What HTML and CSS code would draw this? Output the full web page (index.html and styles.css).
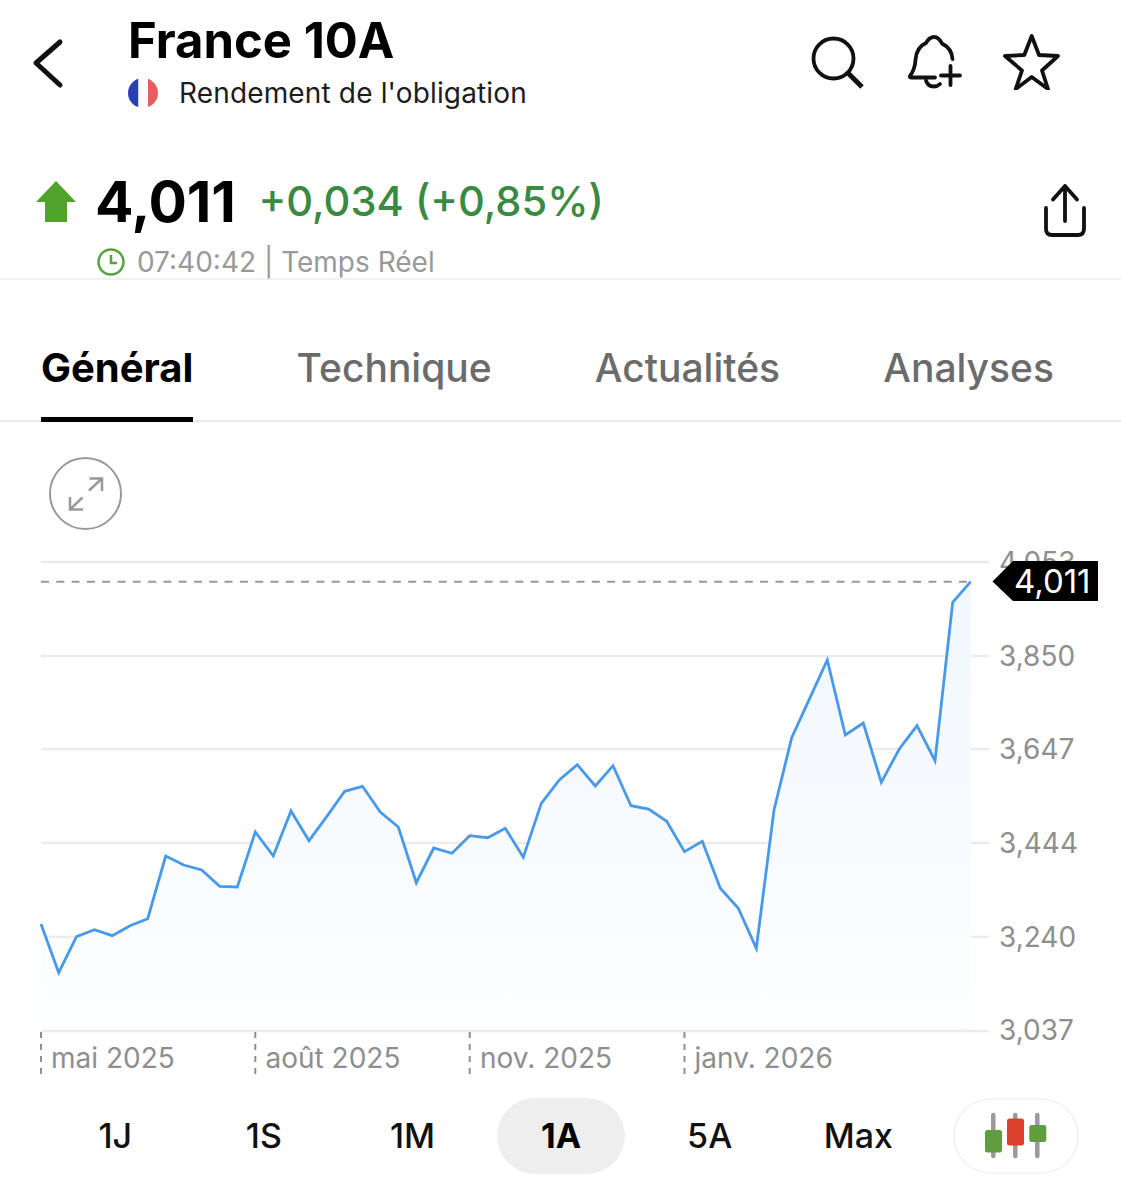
FILE: index.html
```html
<!DOCTYPE html>
<html lang="fr">
<head>
  <meta charset="UTF-8" />
  <title>France 10A</title>
  <link rel="stylesheet" href="styles.css">
</head>
<body>
  <header class="header">
    <button class="back" type="button" aria-label="Retour">
      <svg width="44" height="60" viewBox="26 34 44 60"><path class="icon-line" d="M60 42 L36 63 L60 85" /></svg>
    </button>
    <div class="title-block">
      <h1>France 10A</h1>
      <div class="subtitle">
        <svg class="flag" width="32" height="32" viewBox="0 0 32 32">
          <defs><clipPath id="flag-clip"><circle cx="16" cy="16" r="15" /></clipPath></defs>
          <g clip-path="url(#flag-clip)">
            <rect x="0" y="0" width="11.5" height="32" fill="#2a3fb3" />
            <rect x="11.5" y="0" width="9.5" height="32" fill="#fbfbfb" />
            <rect x="21" y="0" width="11" height="32" fill="#e95c60" />
          </g>
        </svg>
        <span>Rendement de l'obligation</span>
      </div>
    </div>
    <div class="actions">
      <svg width="60" height="60" viewBox="808 30 60 60">
        <circle class="icon-thin" cx="833.5" cy="58.5" r="20" />
        <path class="icon-butt" d="M848 73 L862 87" />
      </svg>
      <svg width="60" height="60" viewBox="905 30 60 60">
        <path class="icon-thin" d="M952.5 59 C952 50 947 46 942 43.5 C940 39.5 937 37 934 37 C931 37 928 39.5 926 43 C919 46 916 52 915.5 60 C915 68 913 72 910 76 C909.5 77 910 77.5 911 77.5 H935" />
        <path class="icon-thin" d="M926 80.5 C927 84 930 86.5 934 86.5 C936.5 86.5 938.5 85.5 940 84" />
        <path class="icon-thin" d="M941 75.5 H960 M950.5 66 V85" />
      </svg>
      <svg width="60" height="60" viewBox="1002 30 60 60">
        <path class="icon-thin" d="M1031.7 36 L1039 55 L1058 56 L1042 70.5 L1048 89 L1031.7 77 L1015.7 89 L1022 70.5 L1005 56 L1024.3 55 Z" />
      </svg>
    </div>
  </header>

  <section class="quote">
    <div class="price-row">
      <svg class="up" width="40" height="42" viewBox="36 182 40 42"><path d="M56 183 L76 204 H67 V224 H45 V204 H36 Z" /></svg>
      <span class="price">4,011</span>
      <span class="change">+0,034 (+0,85%)</span>
      <svg class="share" width="50" height="60" viewBox="1040 180 50 60">
        <path class="icon-thin" d="M1065 185 V220 M1053 198.5 L1065 185 L1077 198.5" />
        <path class="icon-thin" d="M1046 207 V228 C1046 232 1048 234 1052 234 H1078 C1082 234 1084 232 1084 228 V207" />
      </svg>
    </div>
    <div class="time-row">
      <svg width="28" height="28" viewBox="0 0 28 28">
        <circle cx="14" cy="14" r="12.5" class="clock" />
        <path d="M14 7 V15 H20" class="clock" />
      </svg>
      <span>07:40:42 | Temps Réel</span>
    </div>
  </section>

  <nav class="tabs">
    <a class="tab active">Général</a>
    <a class="tab">Technique</a>
    <a class="tab">Actualités</a>
    <a class="tab">Analyses</a>
  </nav>

  <section class="chart">
    <button class="expand" type="button" aria-label="Agrandir">
      <svg width="72" height="72" viewBox="49.5 457.5 72 72">
        <path class="expand-line" d="M88.5 490 L101.5 478 M89 478 H101.5 V490.5" />
        <path class="expand-line" d="M82 497 L69.5 509 M69.5 496.5 V509 H82.5" />
      </svg>
    </button>

    <svg class="plot" width="1121" height="548" viewBox="0 537 1121 548">
      <defs>
        <linearGradient id="area" x1="0" y1="0" x2="0" y2="1">
          <stop offset="0" stop-color="#f1f7fd" />
          <stop offset="1" stop-color="#fdfeff" />
        </linearGradient>
      </defs>

      <line class="grid" x1="41" y1="562" x2="989" y2="562" />
      <line class="grid" x1="41" y1="656" x2="989" y2="656" />
      <line class="grid" x1="41" y1="749" x2="989" y2="749" />
      <line class="grid" x1="41" y1="843" x2="989" y2="843" />
      <line class="grid" x1="41" y1="937" x2="989" y2="937" />

      <polygon class="area" points="41,1031 41,924 58.7,972.7 76.5,936.7 94.4,929.7 112.3,935.7 130,925.7 147.7,918.7 165.7,856 183.7,865 201.7,870 219.7,886.3 237.3,887 255.3,832 273.3,856 291,811 309,840.7 326.7,816.7 344.7,791.3 362.5,786.3 380.3,812 398.3,827 416.3,882.7 433.7,848 452,853.3 469.7,835.7 487.7,837.7 505.3,828.3 523.3,857.3 541.3,803.3 559.3,780 577.3,764.7 595.3,786 613,765.7 631,805.7 648.7,809 666.7,821.3 684.5,851.7 702.3,841.3 720.3,888.3 738.3,908.3 756.3,948.3 774,810 791.7,737.7 809.7,698.3 827.3,660 845.3,735 863.3,723 881.3,782.3 899.3,749 917,725.7 935,760.7 952.7,602.3 970.7,581.7 970.7,1031" />

      <line class="axis" x1="41" y1="1031" x2="989" y2="1031" />
      <line class="last-line" x1="41" y1="581.7" x2="974" y2="581.7" />

      <polyline class="line" points="41,924 58.7,972.7 76.5,936.7 94.4,929.7 112.3,935.7 130,925.7 147.7,918.7 165.7,856 183.7,865 201.7,870 219.7,886.3 237.3,887 255.3,832 273.3,856 291,811 309,840.7 326.7,816.7 344.7,791.3 362.5,786.3 380.3,812 398.3,827 416.3,882.7 433.7,848 452,853.3 469.7,835.7 487.7,837.7 505.3,828.3 523.3,857.3 541.3,803.3 559.3,780 577.3,764.7 595.3,786 613,765.7 631,805.7 648.7,809 666.7,821.3 684.5,851.7 702.3,841.3 720.3,888.3 738.3,908.3 756.3,948.3 774,810 791.7,737.7 809.7,698.3 827.3,660 845.3,735 863.3,723 881.3,782.3 899.3,749 917,725.7 935,760.7 952.7,602.3 970.7,581.7" />

      <text class="label" x="999" y="572">4,053</text>
      <text class="label" x="999" y="666">3,850</text>
      <text class="label" x="999" y="759">3,647</text>
      <text class="label" x="999" y="853">3,444</text>
      <text class="label" x="999" y="947">3,240</text>
      <text class="label" x="999" y="1040">3,037</text>

      <path class="tag" d="M992.5 581.5 L1013 561 H1098 V601 H1013 Z" />
      <text class="tag-text" x="1014" y="593">4,011</text>

      <line class="tick" x1="41" y1="1032" x2="41" y2="1075" />
      <line class="tick" x1="255.3" y1="1032" x2="255.3" y2="1075" />
      <line class="tick" x1="469.7" y1="1032" x2="469.7" y2="1075" />
      <line class="tick" x1="684.5" y1="1032" x2="684.5" y2="1075" />
      <text class="label" x="51" y="1068">mai 2025</text>
      <text class="label" x="265.5" y="1068">août 2025</text>
      <text class="label" x="480" y="1068">nov. 2025</text>
      <text class="label" x="694.5" y="1068">janv. 2026</text>
    </svg>
  </section>

  <div class="ranges">
    <button class="range" type="button">1J</button>
    <button class="range" type="button">1S</button>
    <button class="range" type="button">1M</button>
    <button class="range selected" type="button">1A</button>
    <button class="range" type="button">5A</button>
    <button class="range" type="button">Max</button>
    <button class="candles" type="button" aria-label="Chandeliers">
      <svg width="64" height="48" viewBox="985 1112 64 48">
        <path class="wick" d="M994.3 1115 V1156 M1016.3 1115 V1156 M1038.3 1115 V1156" />
        <rect x="986" y="1130" width="17" height="22.5" rx="2.5" fill="#5f9d3f" />
        <rect x="1008" y="1118.5" width="17" height="27" rx="2.5" fill="#dc402c" />
        <rect x="1030.3" y="1125" width="17" height="17" rx="2.5" fill="#5f9d3f" />
      </svg>
    </button>
  </div>
</body>
</html>
```

FILE: styles.css
```css
* {
  box-sizing: border-box;
}
body {
  margin: 0;
  background: #fff;
  color: #000;
  font-family: 'Inter', 'Liberation Sans', sans-serif;
}
button {
  background: none;
  border: none;
  padding: 0;
  font-family: inherit;
  color: inherit;
}
.icon-line {
  fill: none;
  stroke: #111;
  stroke-width: 5;
  stroke-linecap: round;
  stroke-linejoin: round;
}
.icon-thin {
  fill: none;
  stroke: #111;
  stroke-width: 3.8;
  stroke-linecap: round;
  stroke-linejoin: round;
}
.icon-butt {
  stroke: #111;
  stroke-width: 5;
}
.wick {
  fill: none;
  stroke: #9a9a9a;
  stroke-width: 4.5;
  stroke-linecap: round;
}

/* header */
.header {
  display: flex;
  height: 130px;
  padding-left: 26px;
}
.back {
  width: 44px;
  height: 60px;
  margin-top: 34px;
}
.back svg,
.candles svg,
.expand svg {
  display: block;
}
.title-block {
  margin-left: 59px;
  padding-top: 12px;
}
h1 {
  margin: 0;
  margin-left: -1px;
  font-size: 49px;
  line-height: 57px;
  font-weight: 700;
}
.subtitle {
  display: flex;
  align-items: center;
  margin-top: 7px;
  margin-left: -2px;
  font-size: 28px;
  line-height: 34px;
  letter-spacing: 0.15px;
  color: #1c1c1c;
}
.flag {
  margin-right: 20px;
}
.actions {
  display: flex;
  gap: 37px;
  margin-left: auto;
  padding: 30px 59px 0 0;
}
.actions svg {
  display: block;
}

/* quote */
.quote {
  height: 150px;
  padding: 25px 0 0 36px;
  border-bottom: 2px solid #f0f0f0;
}
.price-row {
  display: flex;
  align-items: center;
  height: 84px;
  padding-top: 8px;
  padding-right: 31px;
}
.price-row svg {
  display: block;
}
.up path {
  fill: #4fa32b;
}
.price {
  margin-left: 19px;
  font-size: 57px;
  font-weight: 700;
  letter-spacing: -0.2px;
}
.change {
  margin-left: 23px;
  font-size: 41.6px;
  font-weight: 500;
  color: #3a8a44;
}
.share {
  margin-left: auto;
  margin-top: 20px;
}
.time-row {
  display: flex;
  align-items: center;
  gap: 12px;
  margin-left: 61px;
  margin-top: 6px;
  font-size: 28px;
  line-height: 34px;
  color: #999;
}
.clock {
  fill: none;
  stroke: #56a33d;
  stroke-width: 2.5;
}

/* tabs */
.tabs {
  display: flex;
  justify-content: space-between;
  align-items: flex-end;
  height: 142px;
  padding: 0 67px 0 41px;
  border-bottom: 2px solid #e9e9e9;
}
.tab {
  position: relative;
  padding-bottom: 28px;
  font-size: 39px;
  line-height: 48px;
  font-weight: 500;
  color: #6b6b6b;
}
.tab.active {
  font-size: 40px;
  font-weight: 700;
  color: #000;
}
.tab.active::after {
  content: "";
  position: absolute;
  left: 0;
  right: 0;
  bottom: -2px;
  height: 5px;
  background: #000;
}

/* chart */
.chart {
  display: flow-root;
}
.expand {
  display: block;
  width: 73px;
  height: 73px;
  margin: 35px 0 0 49px;
  border: 2px solid #999;
  border-radius: 50%;
}
.expand svg {
  margin: -1px;
}
.expand-line {
  fill: none;
  stroke: #999;
  stroke-width: 2.5;
}
.plot {
  display: block;
  margin-top: 7px;
}
.grid,
.axis {
  stroke: #ececec;
  stroke-width: 2.5;
}
.area {
  fill: url(#area);
}
.line {
  fill: none;
  stroke: #479aea;
  stroke-width: 2.8;
  stroke-linejoin: miter;
}
.last-line {
  stroke: #999;
  stroke-width: 2;
  stroke-dasharray: 8 7.3;
}
.label {
  font-size: 28px;
  fill: #8e8e8e;
}
.tag {
  fill: #000;
}
.tag-text {
  font-size: 33px;
  fill: #fff;
}
.tick {
  stroke: #8e8e8e;
  stroke-width: 2;
  stroke-dasharray: 6 6;
}

/* range buttons */
.ranges {
  display: flex;
  align-items: center;
  height: 76px;
  margin-top: 13px;
  padding-left: 41px;
}
.range {
  width: 148.6px;
  height: 76px;
  padding: 0 10px 2px;
  font-size: 34px;
  font-weight: 500;
  color: #111;
}
.range.selected {
  background-color: #eeeeee;
  background-clip: padding-box;
  border-left: 10px solid transparent;
  border-right: 10px solid transparent;
  font-weight: 700;
  color: #000;
  border-radius: 48px / 38px;
}
.candles {
  display: flex;
  align-items: center;
  justify-content: center;
  width: 126px;
  height: 76px;
  margin-left: 20px;
  border: 2px solid #f4f4f4;
  border-radius: 38px;
}
```
